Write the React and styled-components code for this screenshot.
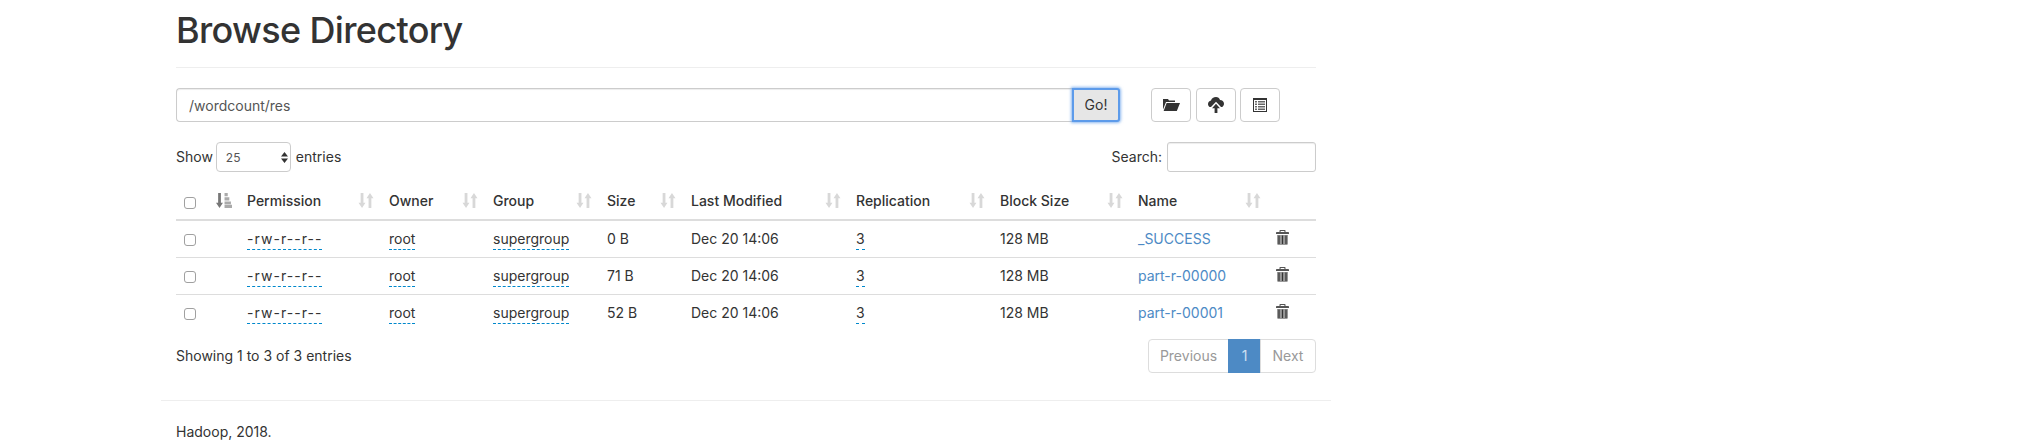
import React from 'react';
import styled, { createGlobalStyle } from 'styled-components';

const TEXT = '#333';
const LINE = '#ddd';
const LINK = '#4d8ac5';

const GlobalStyle = createGlobalStyle`
  html, body {
    margin: 0;
    padding: 0;
    background: #fff;
    color: ${TEXT};
    font-family: Inter, "Liberation Sans", sans-serif;
    font-size: 14px;
    line-height: 20px;
  }
  * { box-sizing: border-box; }
`;

const Page = styled.div`
  width: 1170px;
  margin-left: 161px;
  padding: 0 15px;
`;

const PageHeader = styled.div`
  height: 68px;
  border-bottom: 1px solid #eee;
`;

const Title = styled.h1`
  margin: 0;
  padding-top: 10px;
  font-size: 36px;
  line-height: 40px;
  font-weight: 500;
  letter-spacing: -0.65px;
`;

const Toolbar = styled.div`
  display: flex;
  margin-top: 20px;
  height: 34px;
`;

const PathInput = styled.input`
  width: 896px;
  height: 34px;
  padding: 6px 12px;
  font: inherit;
  color: #555;
  border: 1px solid #ccc;
  border-right: 0;
  border-radius: 4px 0 0 4px;
  box-shadow: inset 0 1px 1px rgba(0, 0, 0, .075);
`;

const GoButton = styled.button`
  width: 48px;
  height: 34px;
  padding: 0;
  font: inherit;
  color: #333;
  background: #e6e6e6;
  border: 2px solid #5d9bea;
  border-radius: 0 3px 3px 0;
  box-shadow: 0 0 3px 1px rgba(93, 155, 234, .7);
`;

const IconGroup = styled.div`
  display: flex;
  gap: 5px;
  margin-left: 31px;
`;

const IconButton = styled.button`
  width: 40px;
  height: 34px;
  padding: 0;
  display: flex;
  align-items: center;
  justify-content: center;
  background: #fff;
  border: 1px solid #ccc;
  border-radius: 4px;
  &:last-child { margin-left: -1px; }
`;

const Controls = styled.div`
  display: flex;
  justify-content: space-between;
  align-items: center;
  margin-top: 20px;
  height: 30px;
`;

const Label = styled.label`
  display: flex;
  align-items: center;
  gap: ${(p) => p.$gap}px;
`;

const PageSize = styled.div`
  position: relative;
  width: 75px;
  height: 30px;
  margin-right: 2px;
  padding: 5px 9px;
  font-size: 12px;
  color: #555;
  border: 1px solid #ccc;
  border-radius: 4px;
`;

const Caret = styled.svg`
  position: absolute;
  right: 2px;
  top: 9px;
`;

const SearchInput = styled.input`
  width: 149px;
  height: 30px;
  border: 1px solid #ccc;
  border-radius: 3px;
  box-shadow: inset 0 1px 1px rgba(0, 0, 0, .075);
`;

const Table = styled.table`
  width: 1140px;
  margin-top: 11px;
  border-collapse: collapse;
  table-layout: fixed;
`;

const HeadCell = styled.th`
  position: relative;
  height: 37px;
  padding: 8px;
  text-align: left;
  font-weight: 500;
  border-bottom: 2px solid ${LINE};
`;

const SortSlot = styled.span`
  position: absolute;
  right: 7px;
  top: 10px;
  display: flex;
`;

const Cell = styled.td`
  height: 37px;
  padding: 8px;
  border-top: ${(p) => (p.$first ? '0' : `1px solid ${LINE}`)};
  vertical-align: top;
`;

const Editable = styled.span`
  display: inline-block;
  vertical-align: top;
  height: 21px;
  margin-bottom: -1px;
  letter-spacing: ${(p) => p.$spacing || 0}px;
  border-bottom: 1px dashed #0088cc;
`;

const FileLink = styled.a`
  color: ${LINK};
  text-decoration: none;
`;

const Check = styled.span`
  display: block;
  width: 12px;
  height: 12px;
  margin-top: ${(p) => p.$top}px;
  background: #fff;
  border: 1px solid #a0a0a0;
  border-radius: 3px;
`;

const TrashSlot = styled.span`
  display: block;
  margin-top: 1px;
`;

const Footer = styled.div`
  display: flex;
  justify-content: space-between;
  margin-top: 7px;
`;

const Summary = styled.div`
  padding-top: 7px;
`;

const Pager = styled.div`
  display: flex;
  height: 34px;
`;

const PagerItem = styled.span`
  width: ${(p) => p.$width}px;
  padding: 6px 0;
  text-align: center;
  color: ${(p) => (p.$active ? '#cfe0f2' : '#999')};
  background: ${(p) => (p.$active ? LINK : '#fff')};
  border: 1px solid ${(p) => (p.$active ? LINK : LINE)};
  margin-left: -1px;
  &:first-child { border-radius: 4px 0 0 4px; }
  &:last-child { border-radius: 0 4px 4px 0; }
`;

const Rule = styled.hr`
  width: 1170px;
  margin: 27px 0 0 -15px;
  border: 0;
  border-top: 1px solid #eee;
`;

const Credit = styled.p`
  margin: 21px 0 0;
`;

const FolderIcon = () => (
  <svg width="18" height="14" viewBox="0 0 18 14">
    <path fill="#333" d="M1 1h5l1 1.500h6V4H4L1 11.500z" />
    <path fill="#333" d="M4.600 5H18l-3.200 8H1.600z" />
  </svg>
);

const UploadIcon = () => (
  <svg width="16" height="16" viewBox="0 0 16 16">
    <path fill="#333" d="M8 0c2 0 3.500 1.200 4 3 2.200 0 4 1.700 4 3.800 0 1.300-.7 2.400-1.700 3.200H13L8 4.700 3 10H1.700C.7 9.300 0 8.200 0 7c0-1.800 1.300-3.200 3-3.500C3.500 1.400 5.500 0 8 0z" />
    <path fill="#333" d="M8 6.800l4 4.500H9.400V16H6.600v-4.700H4z" />
  </svg>
);

const ListIcon = () => (
  <svg width="14" height="14" viewBox="0 0 14 14">
    <path fill="#333" fillRule="evenodd" d="M0 0h14v14H0zM1 2v11h12V2z" />
    <path fill="#666" d="M2 3h2v1.500H2zM5 3h7v1.500H5zM2 5.500h2V7H2zM5 5.500h7V7H5zM2 8h2v1.500H2zM5 8h7v1.500H5zM2 10.500h2V12H2zM5 10.500h7V12H5z" />
  </svg>
);

const TrashIcon = () => (
  <svg width="13" height="15" viewBox="0 0 13 15" style={{ display: 'block' }}>
    <path fill="#555" fillRule="evenodd" d="M3.500 2V.6c0-.3.3-.6.6-.6h4.800c.3 0 .6.300.6.600V2H12c.6 0 1 .4 1 1v1H0V3c0-.6.4-1 1-1zM4.600 1v1h3.800V1z" />
    <path fill="#999" d="M1 5h11v8.500c0 .8-.7 1.500-1.500 1.500h-8C1.700 15 1 14.300 1 13.500z" />
    <path fill="#333" d="M2.400 5.500h1.200V14H2.400zM5.900 5.500h1.200V14H5.900zM9.400 5.500h1.200V14H9.400z" />
  </svg>
);

const SortBoth = () => (
  <svg width="16" height="15" viewBox="0 0 14 14">
    <path fill="#d8d8d8" d="M2 0h2.600v9H6.500L3.300 14 0 9h2zM9.400 14H12V5h2L10.700 0 7.500 5h1.900z" />
  </svg>
);

const SortAsc = () => (
  <svg width="16" height="15" viewBox="0 0 15 14">
    <path fill="#777" d="M2 0h2.600v9H6.500L3.300 14 0 9h2z" />
    <path fill="#aaa" d="M8 0h3v3H8zM8 4h4.500v3H8zM8 8h6v2.500H8zM8 11h7v3H8z" />
  </svg>
);

const columns = [
  { width: 33 },
  { width: 30, sort: 'asc' },
  { width: 142, label: 'Permission' },
  { width: 104, label: 'Owner' },
  { width: 114, label: 'Group' },
  { width: 84, label: 'Size' },
  { width: 165, label: 'Last Modified' },
  { width: 144, label: 'Replication' },
  { width: 138, label: 'Block Size' },
  { width: 138, label: 'Name' },
  { width: 48 },
];

const rows = [
  { size: '0 B', name: '_SUCCESS' },
  { size: '71 B', name: 'part-r-00000' },
  { size: '52 B', name: 'part-r-00001' },
];

const App = () => (
  <>
    <GlobalStyle />
    <Page>
      <PageHeader>
        <Title>Browse Directory</Title>
      </PageHeader>
      <Toolbar>
        <PathInput defaultValue="/wordcount/res" />
        <GoButton>Go!</GoButton>
        <IconGroup>
          <IconButton><FolderIcon /></IconButton>
          <IconButton><UploadIcon /></IconButton>
          <IconButton><ListIcon /></IconButton>
        </IconGroup>
      </Toolbar>
      <Controls>
        <Label $gap={3}>
          Show
          <PageSize>
            25
            <Caret width="7" height="11" viewBox="0 0 7 11">
              <path fill="#333" d="M3.500 0L7 4.500H0zM3.500 11L0 6.500h7z" />
            </Caret>
          </PageSize>
          entries
        </Label>
        <Label $gap={5}>
          Search:
          <SearchInput />
        </Label>
      </Controls>
      <Table>
        <colgroup>
          {columns.map((c, i) => <col key={i} width={c.width} />)}
        </colgroup>
        <thead>
          <tr>
            {columns.map((c, i) => (
              <HeadCell key={i}>
                {i === 0 && <Check $top={3} />}
                {c.label}
                {c.label && <SortSlot><SortBoth /></SortSlot>}
                {c.sort && <SortSlot><SortAsc /></SortSlot>}
              </HeadCell>
            ))}
          </tr>
        </thead>
        <tbody>
          {rows.map((r, i) => (
            <tr key={r.name}>
              <Cell $first={i === 0}><Check $top={5} /></Cell>
              <Cell $first={i === 0} />
              <Cell $first={i === 0}><Editable $spacing={1.05}>-rw-r--r--</Editable></Cell>
              <Cell $first={i === 0}><Editable>root</Editable></Cell>
              <Cell $first={i === 0}><Editable>supergroup</Editable></Cell>
              <Cell $first={i === 0}>{r.size}</Cell>
              <Cell $first={i === 0}>Dec 20 14:06</Cell>
              <Cell $first={i === 0}><Editable>3</Editable></Cell>
              <Cell $first={i === 0}>128 MB</Cell>
              <Cell $first={i === 0}><FileLink href="#">{r.name}</FileLink></Cell>
              <Cell $first={i === 0}><TrashSlot><TrashIcon /></TrashSlot></Cell>
            </tr>
          ))}
        </tbody>
      </Table>
      <Footer>
        <Summary>Showing 1 to 3 of 3 entries</Summary>
        <Pager>
          <PagerItem $width={81}>Previous</PagerItem>
          <PagerItem $width={33} $active>1</PagerItem>
          <PagerItem $width={56}>Next</PagerItem>
        </Pager>
      </Footer>
      <Rule />
      <Credit>Hadoop, 2018.</Credit>
    </Page>
  </>
);

export default App;
